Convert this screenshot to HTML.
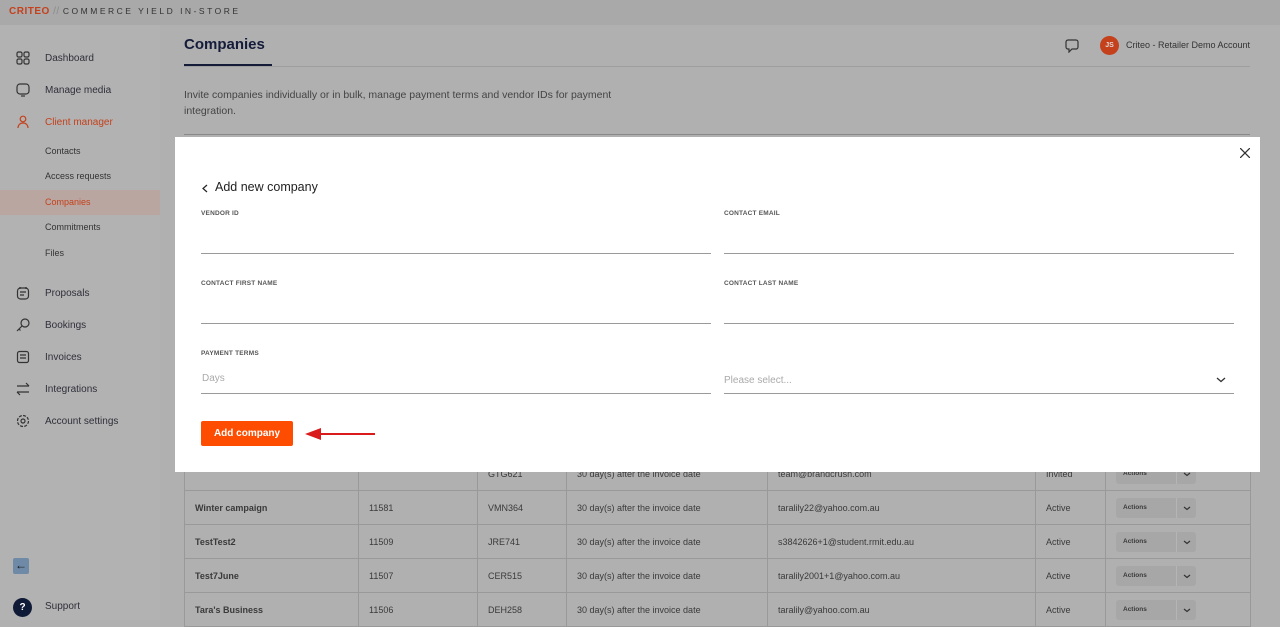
<!DOCTYPE html>
<html style="background:#b0b0b0"><head><style>
*{box-sizing:border-box;margin:0;padding:0}
body{width:1280px;height:620px;overflow:hidden;background:#b0b0b0;font-family:"Liberation Sans",sans-serif;position:relative;color:#333}
.bg{position:absolute;left:0;top:0;width:1280px;height:620px;background:#b0b0b0}
.top{position:absolute;left:0;top:0;width:1280px;height:25px;background:#a9a9a9}
.logo{position:absolute;left:9px;top:6px;font-size:10px;font-weight:bold;color:#c4411c;letter-spacing:.5px}
.logo span{color:#333;font-weight:normal;letter-spacing:2.5px;font-size:8.5px}
.logo i{color:#8a8a8a;font-style:normal;font-weight:normal}
.side{position:absolute;left:0;top:25px;width:160px;height:595px;background:#b2b2b2}
.nav{position:absolute;left:45px;font-size:10px;color:#2f2f3a}
.ico{position:absolute;left:16px;width:14px;height:14px}
.sub{position:absolute;left:45px;font-size:9px;color:#333}
.sel{position:absolute;left:0;top:165px;width:160px;height:25px;background:#baa6a0}
.t{position:absolute;white-space:nowrap}
.modal{position:absolute;left:175px;top:137px;width:1085px;height:335px;background:#fff}
.lbl{position:absolute;font-size:6.5px;font-weight:bold;color:#555;letter-spacing:.2px}
.ln{position:absolute;height:1px;background:#9a9a9a;width:510px}
table{position:absolute;left:184px;top:456px;border-collapse:collapse;font-size:9px;color:#3a3a3a}
td{border:1px solid #999;height:34px;padding-left:10px}
.act{display:inline-block;width:80px;height:20px;background:#a7a7a7;border-radius:3px;font-size:6.5px;font-weight:bold;line-height:20px;padding-left:7px;position:relative}
.act svg{position:absolute;left:60px;top:0;border-left:1px solid #b5b5b5}
</style></head><body>
<div class="bg"></div>
<div class="top"><div class="logo">CRITEO <i>//</i> <span>COMMERCE YIELD IN-STORE</span></div></div>
<div class="side">
<div class="sel"></div>
<svg class="ico" style="top:26px" viewBox="0 0 14 14" fill="none" stroke="#333" stroke-width="1.2"><rect x="1" y="1" width="5" height="5" rx="1.5"/><rect x="8" y="1" width="5" height="5" rx="1.5"/><rect x="1" y="8" width="5" height="5" rx="1.5"/><rect x="8" y="8" width="5" height="5" rx="1.5"/></svg>
<div class="nav" style="top:28px">Dashboard</div>
<svg class="ico" style="top:58px" viewBox="0 0 14 14" fill="none" stroke="#333" stroke-width="1.2"><rect x="1" y="1" width="12" height="10" rx="3"/><path d="M5 13h4"/></svg>
<div class="nav" style="top:60px">Manage media</div>
<svg class="ico" style="top:90px" viewBox="0 0 14 14" fill="none" stroke="#c4411c" stroke-width="1.2"><circle cx="7" cy="4" r="2.8"/><path d="M2 13c0-3 2-5 5-5s5 2 5 5"/></svg>
<div class="nav" style="top:92px;color:#c4411c">Client manager</div>
<div class="sub" style="top:121px">Contacts</div>
<div class="sub" style="top:146px">Access requests</div>
<div class="sub" style="top:172px;color:#c4411c">Companies</div>
<div class="sub" style="top:197px">Commitments</div>
<div class="sub" style="top:223px">Files</div>
<svg class="ico" style="top:261px" viewBox="0 0 14 14" fill="none" stroke="#333" stroke-width="1.2"><rect x="1.5" y="2" width="11" height="11" rx="3"/><path d="M4 6h6M4 9h4M4 1v2M10 1v2"/></svg>
<div class="nav" style="top:263px">Proposals</div>
<svg class="ico" style="top:293px" viewBox="0 0 14 14" fill="none" stroke="#333" stroke-width="1.2"><circle cx="9" cy="5" r="4"/><path d="M6 8l-5 5M3 11l1.5 1.5"/></svg>
<div class="nav" style="top:295px">Bookings</div>
<svg class="ico" style="top:325px" viewBox="0 0 14 14" fill="none" stroke="#333" stroke-width="1.2"><rect x="1.5" y="1.5" width="11" height="11" rx="2"/><path d="M4 5h6M4 8h6"/></svg>
<div class="nav" style="top:327px">Invoices</div>
<svg class="ico" style="top:357px" viewBox="0 0 14 14" fill="none" stroke="#333" stroke-width="1.2"><path d="M1 4h12M10 1l3 3M13 10H1M4 13l-3-3"/></svg>
<div class="nav" style="top:359px">Integrations</div>
<svg class="ico" style="top:389px" viewBox="0 0 14 14" fill="none" stroke="#333" stroke-width="1.2"><circle cx="7" cy="7" r="2"/><circle cx="7" cy="7" r="5.5" stroke-dasharray="3 1.3"/></svg>
<div class="nav" style="top:391px">Account settings</div>
<div style="position:absolute;left:13px;top:533px;width:16px;height:16px;background:#6f8aa6;border-radius:2px;color:#111;font-size:12px;line-height:15px;text-align:center">←</div>
<div style="position:absolute;left:13px;top:573px;width:19px;height:19px;background:#0f1b36;border-radius:50%;color:#fff;font-size:10px;font-weight:bold;line-height:19px;text-align:center">?</div>
<div class="nav" style="top:576px">Support</div>
</div>
<div class="t" style="left:184px;top:36px;font-size:15px;font-weight:bold;color:#141c3a">Companies</div>
<div style="position:absolute;left:184px;top:66px;width:1066px;height:1px;background:#9e9e9e"></div>
<div style="position:absolute;left:184px;top:64px;width:88px;height:2px;background:#141c3a"></div>
<svg style="position:absolute;left:1065px;top:39px" width="14" height="14" viewBox="0 0 14 14" fill="none" stroke="#333" stroke-width="1.2"><path d="M3 1h8a2 2 0 0 1 2 2v5a2 2 0 0 1-2 2H7l-3 3v-3H3a2 2 0 0 1-2-2V3a2 2 0 0 1 2-2z"/></svg>
<div style="position:absolute;left:1100px;top:36px;width:19px;height:19px;border-radius:50%;background:#c4411c;color:#ddd;font-size:7px;font-weight:bold;text-align:center;line-height:19px">JS</div>
<div class="t" style="left:1126px;top:40px;font-size:9px;color:#333">Criteo - Retailer Demo Account</div>
<div class="t" style="left:184px;top:87px;font-size:10.5px;line-height:16px;color:#444">Invite companies individually or in bulk, manage payment terms and vendor IDs for payment<br>integration.</div>
<div style="position:absolute;left:184px;top:134px;width:1066px;height:1px;background:#888"></div>
<table>
<tr><td style="width:174px"></td><td style="width:119px"></td><td style="width:89px">GTG621</td><td style="width:201px">30 day(s) after the invoice date</td><td style="width:268px">team@brandcrush.com</td><td style="width:70px">Invited</td><td style="width:145px"><span class="act">Actions<svg width="20" height="20"><path d="M7 9l3 2.5 3-2.5" stroke="#333" fill="none" stroke-width="1.2"/></svg></span></td></tr>
<tr><td style="font-weight:bold">Winter campaign</td><td>11581</td><td>VMN364</td><td>30 day(s) after the invoice date</td><td>taralily22@yahoo.com.au</td><td>Active</td><td><span class="act">Actions<svg width="20" height="20"><path d="M7 9l3 2.5 3-2.5" stroke="#333" fill="none" stroke-width="1.2"/></svg></span></td></tr>
<tr><td style="font-weight:bold">TestTest2</td><td>11509</td><td>JRE741</td><td>30 day(s) after the invoice date</td><td>s3842626+1@student.rmit.edu.au</td><td>Active</td><td><span class="act">Actions<svg width="20" height="20"><path d="M7 9l3 2.5 3-2.5" stroke="#333" fill="none" stroke-width="1.2"/></svg></span></td></tr>
<tr><td style="font-weight:bold">Test7June</td><td>11507</td><td>CER515</td><td>30 day(s) after the invoice date</td><td>taralily2001+1@yahoo.com.au</td><td>Active</td><td><span class="act">Actions<svg width="20" height="20"><path d="M7 9l3 2.5 3-2.5" stroke="#333" fill="none" stroke-width="1.2"/></svg></span></td></tr>
<tr><td style="font-weight:bold">Tara's Business</td><td>11506</td><td>DEH258</td><td>30 day(s) after the invoice date</td><td>taralily@yahoo.com.au</td><td>Active</td><td><span class="act">Actions<svg width="20" height="20"><path d="M7 9l3 2.5 3-2.5" stroke="#333" fill="none" stroke-width="1.2"/></svg></span></td></tr>
</table>
<div class="modal">
<svg style="position:absolute;left:1065px;top:11px" width="10" height="10"><path d="M0 0L10 10M10 0L0 10" stroke="#333" stroke-width="1.3"/></svg>
<svg style="position:absolute;left:27px;top:47px" width="6" height="9"><path d="M5 1L1 4.5 5 8" stroke="#222" fill="none" stroke-width="1.2"/></svg>
<div class="t" style="left:40px;top:43px;font-size:12.5px;color:#222">Add new company</div>
<div class="lbl" style="left:26px;top:73px">VENDOR ID</div><div class="ln" style="left:26px;top:116px"></div>
<div class="lbl" style="left:549px;top:73px">CONTACT EMAIL</div><div class="ln" style="left:549px;top:116px"></div>
<div class="lbl" style="left:26px;top:143px">CONTACT FIRST NAME</div><div class="ln" style="left:26px;top:186px"></div>
<div class="lbl" style="left:549px;top:143px">CONTACT LAST NAME</div><div class="ln" style="left:549px;top:186px"></div>
<div class="lbl" style="left:26px;top:213px">PAYMENT TERMS</div>
<div class="t" style="left:27px;top:236px;font-size:10px;color:#aaa">Days</div><div class="ln" style="left:26px;top:256px"></div>
<div class="t" style="left:549px;top:238px;font-size:10px;color:#aaa">Please select...</div>
<svg style="position:absolute;left:1041px;top:240px" width="10" height="6"><path d="M1 1l4 3.5 4-3.5" stroke="#333" fill="none" stroke-width="1.3"/></svg>
<div class="ln" style="left:549px;top:256px"></div>
<div style="position:absolute;left:26px;top:284px;width:92px;height:25px;background:#fe4d00;border-radius:2px;color:#fff;font-size:10px;font-weight:bold;text-align:center;line-height:25px">Add company</div>
<svg style="position:absolute;left:130px;top:289px" width="72" height="16"><path d="M70 8H14" stroke="#d91b1b" stroke-width="2"/><path d="M0 8l16-6v12z" fill="#d91b1b"/></svg>
</div>
</body></html>
